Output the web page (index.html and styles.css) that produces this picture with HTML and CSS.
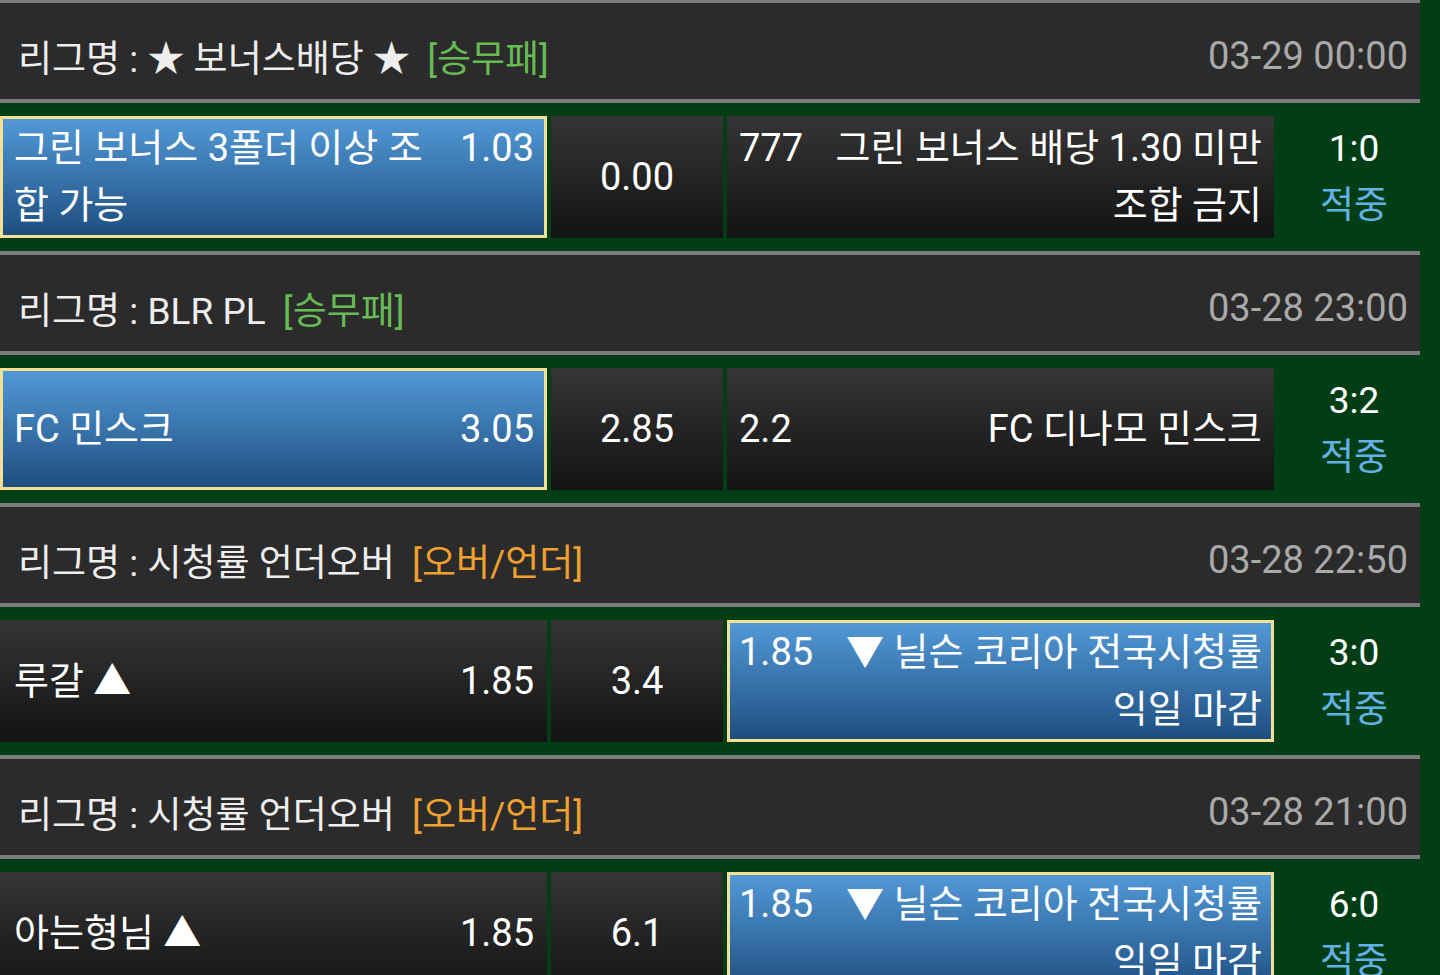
FILE: index.html
```html
<!DOCTYPE html>
<html lang="ko">
<head>
    <meta charset="UTF-8">
    <meta name="viewport" content="width=device-width, initial-scale=1.0">
    <link rel="stylesheet" href="styles.css">
</head>
<body>
    <div class="board">
        <section class="match">
            <header class="league">
                <span class="league-name">리그명 : ★ 보너스배당 ★ <em class="bet-type win">[승무패]</em></span>
                <span class="league-time">03-29 00:00</span>
            </header>
            <div class="bet-row">
                <div class="cell home picked">
                    <div class="pick"><span class="team">그린 보너스 3폴더 이상 조합 가능</span><span class="odds">1.03</span></div>
                </div>
                <div class="cell draw">0.00</div>
                <div class="cell away">
                    <div class="pick"><span class="odds">777</span><span class="team">그린 보너스 배당 1.30 미만 조합 금지</span></div>
                </div>
                <div class="result"><span class="score">1:0</span><span class="state">적중</span></div>
            </div>
        </section>

        <section class="match">
            <header class="league">
                <span class="league-name">리그명 : BLR PL <em class="bet-type win">[승무패]</em></span>
                <span class="league-time">03-28 23:00</span>
            </header>
            <div class="bet-row">
                <div class="cell home picked">
                    <div class="pick"><span class="team">FC 민스크</span><span class="odds">3.05</span></div>
                </div>
                <div class="cell draw">2.85</div>
                <div class="cell away">
                    <div class="pick"><span class="odds">2.2</span><span class="team">FC 디나모 민스크</span></div>
                </div>
                <div class="result"><span class="score">3:2</span><span class="state">적중</span></div>
            </div>
        </section>

        <section class="match">
            <header class="league">
                <span class="league-name">리그명 : 시청률 언더오버 <em class="bet-type over">[오버/언더]</em></span>
                <span class="league-time">03-28 22:50</span>
            </header>
            <div class="bet-row">
                <div class="cell home">
                    <div class="pick"><span class="team">루갈 ▲</span><span class="odds">1.85</span></div>
                </div>
                <div class="cell draw">3.4</div>
                <div class="cell away picked">
                    <div class="pick"><span class="odds">1.85</span><span class="team">▼ 닐슨 코리아 전국시청률 익일 마감</span></div>
                </div>
                <div class="result"><span class="score">3:0</span><span class="state">적중</span></div>
            </div>
        </section>

        <section class="match">
            <header class="league">
                <span class="league-name">리그명 : 시청률 언더오버 <em class="bet-type over">[오버/언더]</em></span>
                <span class="league-time">03-28 21:00</span>
            </header>
            <div class="bet-row">
                <div class="cell home">
                    <div class="pick"><span class="team">아는형님 ▲</span><span class="odds">1.85</span></div>
                </div>
                <div class="cell draw">6.1</div>
                <div class="cell away picked">
                    <div class="pick"><span class="odds">1.85</span><span class="team">▼ 닐슨 코리아 전국시청률 익일 마감</span></div>
                </div>
                <div class="result"><span class="score">6:0</span><span class="state">적중</span></div>
            </div>
        </section>
    </div>
</body>
</html>
```

FILE: styles.css
```css
/* bet history list */
body {
    margin: 0;
    background: #013d15;
    color: #fff;
    font-family: Roboto, "Noto Sans CJK KR", sans-serif;
}

.board {
    width: 1420px;
    margin-top: -1px;
}

/* league header */
.league {
    box-sizing: border-box;
    height: 104px;
    display: flex;
    justify-content: space-between;
    align-items: center;
    padding: 10px 12px 0 18px;
    background: #2b2b2b;
    border-top: 4px solid #7c7c7c;
    border-bottom: 4px solid #7c7c7c;
}

.league-name {
    font-size: 37px;
    color: #eeeeee;
    white-space: nowrap;
}

.bet-type {
    font-style: normal;
    margin-left: 8px;
}

.bet-type.win {
    color: #66bb55;
}

.bet-type.over {
    color: #f0a02e;
}

.league-time {
    font-size: 38px;
    color: #a9a9a9;
}

/* bet row */
.bet-row {
    height: 122px;
    margin: 13px 0;
    display: grid;
    grid-template-columns: 547px 172px 547px 1fr;
    column-gap: 4px;
    font-size: 38px;
    line-height: 57px;
}

.cell {
    display: flex;
    align-items: center;
    padding: 0 13px 0 14px;
    background: linear-gradient(#353535, #131313);
}

.cell.picked {
    background: linear-gradient(#539bd9, #1d4c7e);
    box-shadow: inset 0 0 0 3px #f2e096;
}

.pick {
    flex: 1;
    display: flex;
    align-items: baseline;
    gap: 20px;
}

.team {
    flex: 1;
}

.away {
    padding: 0 12px;
}

.away .team {
    text-align: right;
}

.draw {
    justify-content: center;
    padding: 0;
}

.result {
    display: flex;
    flex-direction: column;
    align-items: center;
    justify-content: center;
    padding-left: 10px;
    font-size: 37px;
}

.state {
    color: #62b2e6;
}
```
